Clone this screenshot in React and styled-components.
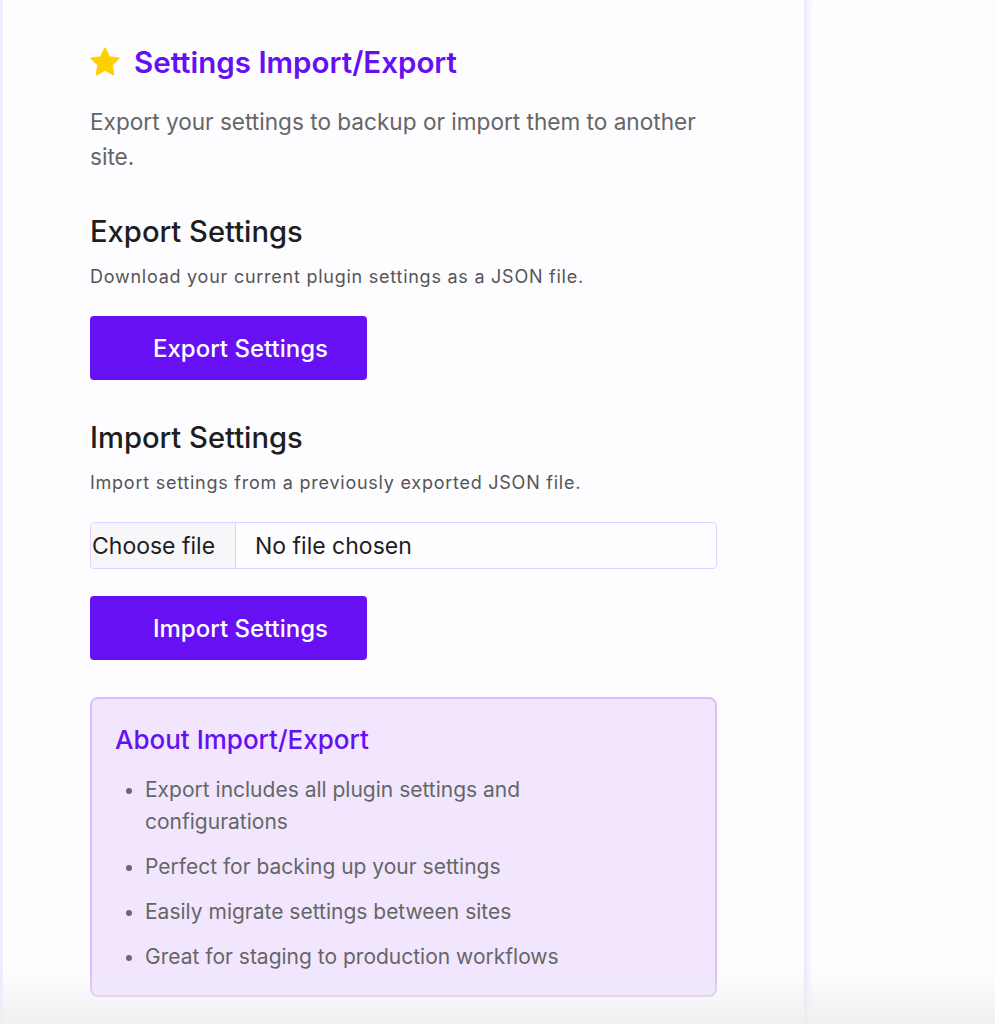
import React from 'react';
import styled, { createGlobalStyle } from 'styled-components';

const Global = createGlobalStyle`
  html, body {
    margin: 0;
    padding: 0;
    background: #fdfcff;
  }
  body {
    font-family: Inter, "Noto Sans", "Liberation Sans", sans-serif;
    -webkit-font-smoothing: antialiased;
  }
`;

const Page = styled.div`
  display: flex;
  min-height: 1024px;
  background: #fdfcff;
  position: relative;
  overflow: hidden;
`;

const Panel = styled.div`
  width: 806px;
  flex-shrink: 0;
  box-sizing: border-box;
  border-left: 3px solid #f2ecff;
  border-right: 2px solid #efe6ff;
  box-shadow: 3px 0 5px rgba(180, 150, 255, 0.16);
  padding: 40px 87px 0;
  background: #fdfcff;
`;

const Title = styled.h2`
  display: flex;
  align-items: center;
  gap: 13px;
  margin: 0 0 20px -1px;
  font-size: 29.5px;
  font-weight: 600;
  color: #6610f2;
  line-height: 44px;
`;

const Lead = styled.p`
  margin: 0 0 38px;
  width: 615px;
  font-size: 22.6px;
  line-height: 35px;
  color: #666;
`;

const Heading = styled.h3`
  margin: 0 0 12px;
  font-size: 29.2px;
  font-weight: 500;
  color: #1e1e1e;
  line-height: 40px;
`;

const Hint = styled.p`
  margin: 0 0 26px;
  font-size: 18px;
  letter-spacing: 0.75px;
  line-height: 26px;
  color: #555;
`;

const Button = styled.button`
  display: block;
  height: 64px;
  padding: 0 39px 0 63px;
  margin-bottom: ${p => p.gap}px;
  border: none;
  border-radius: 4px;
  background: #6810f4;
  color: #fff;
  font-family: inherit;
  font-size: 24px;
  font-weight: 500;
  cursor: pointer;
`;

const FileBox = styled.label`
  display: flex;
  width: 627px;
  height: 47px;
  box-sizing: border-box;
  border: 1px solid #e2d2ff;
  border-radius: 4px;
  overflow: hidden;
  margin-bottom: 27px;
  background: #fefdff;
  font-size: 23px;
  color: #1e1e1e;
`;

const FilePick = styled.span`
  display: flex;
  align-items: center;
  width: 145px;
  box-sizing: border-box;
  padding-left: 1px;
  background: #f7f6f9;
  border-right: 1px solid #e2d2ff;
`;

const FileName = styled.span`
  display: flex;
  align-items: center;
  padding-left: 19px;
`;

const About = styled.div`
  width: 627px;
  box-sizing: border-box;
  margin-top: 37px;
  padding: 23px 23px 22px;
  background: #f1e6fe;
  border: 2px solid #d9befb;
  border-radius: 8px;
`;

const AboutTitle = styled.h4`
  margin: 0 0 16px;
  font-size: 26px;
  font-weight: 500;
  color: #6610f2;
  line-height: 36px;
`;

const List = styled.ul`
  margin: 0;
  padding: 0;
  list-style: none;
  display: flex;
  flex-direction: column;
  gap: 13px;
  color: #666;
  font-size: 21px;
  line-height: 32px;
`;

const Item = styled.li`
  display: flex;
  gap: 13px;
  &::before {
    content: '';
    flex-shrink: 0;
    width: 6px;
    height: 6px;
    margin: 14px 0 0 11px;
    border-radius: 50%;
    background: #6a6a6a;
  }
`;

const Fade = styled.div`
  position: absolute;
  left: 0;
  right: 0;
  bottom: 0;
  height: 52px;
  background: linear-gradient(to bottom, rgba(240, 240, 240, 0), rgba(238, 238, 238, 0.9));
  pointer-events: none;
`;

const Star = () => (
  <svg width="32" height="32" viewBox="0 0 24 24">
    <path
      d="M12 1.8l3.1 6.6 7.1.9-5.2 4.9 1.3 7.1L12 17.8l-6.3 3.5 1.3-7.1-5.2-4.9 7.1-.9z"
      fill="#ffd000"
      stroke="#ffd000"
      strokeWidth="1.4"
      strokeLinejoin="round"
    />
  </svg>
);

export default function App() {
  return (
    <>
      <Global />
      <Page>
        <Panel>
          <Title>
            <Star />
            Settings Import/Export
          </Title>
          <Lead>Export your settings to backup or import them to another site.</Lead>

          <Heading>Export Settings</Heading>
          <Hint>Download your current plugin settings as a JSON file.</Hint>
          <Button gap={38}>Export Settings</Button>

          <Heading>Import Settings</Heading>
          <Hint>Import settings from a previously exported JSON file.</Hint>
          <FileBox>
            <FilePick>Choose file</FilePick>
            <FileName>No file chosen</FileName>
          </FileBox>
          <Button gap={0}>Import Settings</Button>

          <About>
            <AboutTitle>About Import/Export</AboutTitle>
            <List>
              <Item><span>Export includes all plugin settings and<br />configurations</span></Item>
              <Item><span>Perfect for backing up your settings</span></Item>
              <Item><span>Easily migrate settings between sites</span></Item>
              <Item><span>Great for staging to production workflows</span></Item>
            </List>
          </About>
        </Panel>
        <Fade />
      </Page>
    </>
  );
}
